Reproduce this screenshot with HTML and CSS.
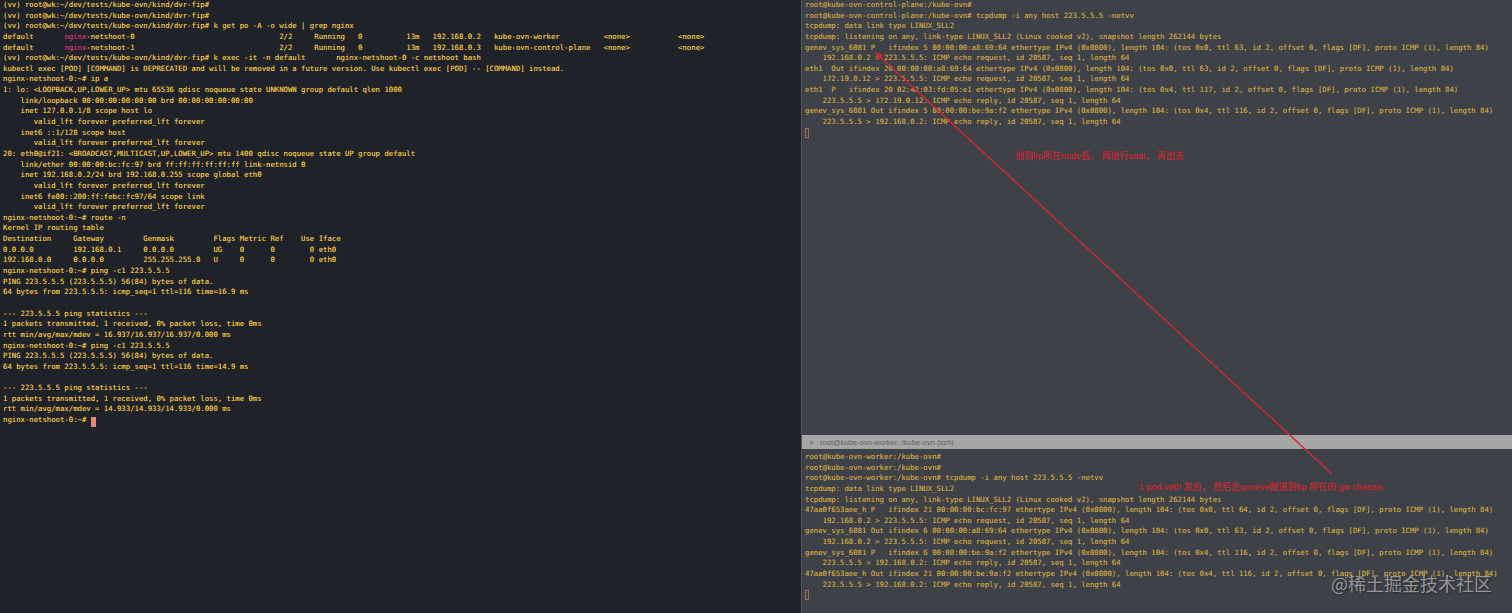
FILE: index.html
```html
<!DOCTYPE html>
<html lang="zh">
<head>
<meta charset="utf-8">
<title>kube-ovn tcpdump</title>
<link rel="stylesheet" href="styles.css">
</head>
<body>
<main class="desktop">
<section class="pane-left">
<pre class="term term-dark">(vv) root@wk:~/dev/tests/kube-ovn/kind/dvr-fip#
(vv) root@wk:~/dev/tests/kube-ovn/kind/dvr-fip#
(vv) root@wk:~/dev/tests/kube-ovn/kind/dvr-fip# k get po -A -o wide | grep nginx
default       <span class="match">nginx</span>-netshoot-0                                 2/2     Running   0          13m   192.168.0.2   kube-ovn-worker          &lt;none&gt;           &lt;none&gt;
default       <span class="match">nginx</span>-netshoot-1                                 2/2     Running   0          13m   192.168.0.3   kube-ovn-control-plane   &lt;none&gt;           &lt;none&gt;
(vv) root@wk:~/dev/tests/kube-ovn/kind/dvr-fip# k exec -it -n default       nginx-netshoot-0 -c netshoot bash
kubectl exec [POD] [COMMAND] is DEPRECATED and will be removed in a future version. Use kubectl exec [POD] -- [COMMAND] instead.
nginx-netshoot-0:~# ip a
1: lo: &lt;LOOPBACK,UP,LOWER_UP&gt; mtu 65536 qdisc noqueue state UNKNOWN group default qlen 1000
    link/loopback 00:00:00:00:00:00 brd 00:00:00:00:00:00
    inet 127.0.0.1/8 scope host lo
       valid_lft forever preferred_lft forever
    inet6 ::1/128 scope host
       valid_lft forever preferred_lft forever
20: eth0@if21: &lt;BROADCAST,MULTICAST,UP,LOWER_UP&gt; mtu 1400 qdisc noqueue state UP group default
    link/ether 00:00:00:bc:fc:97 brd ff:ff:ff:ff:ff:ff link-netnsid 0
    inet 192.168.0.2/24 brd 192.168.0.255 scope global eth0
       valid_lft forever preferred_lft forever
    inet6 fe80::200:ff:febc:fc97/64 scope link
       valid_lft forever preferred_lft forever
nginx-netshoot-0:~# route -n
Kernel IP routing table
Destination     Gateway         Genmask         Flags Metric Ref    Use Iface
0.0.0.0         192.168.0.1     0.0.0.0         UG    0      0        0 eth0
192.168.0.0     0.0.0.0         255.255.255.0   U     0      0        0 eth0
nginx-netshoot-0:~# ping -c1 223.5.5.5
PING 223.5.5.5 (223.5.5.5) 56(84) bytes of data.
64 bytes from 223.5.5.5: icmp_seq=1 ttl=116 time=16.9 ms

--- 223.5.5.5 ping statistics ---
1 packets transmitted, 1 received, 0% packet loss, time 0ms
rtt min/avg/max/mdev = 16.937/16.937/16.937/0.000 ms
nginx-netshoot-0:~# ping -c1 223.5.5.5
PING 223.5.5.5 (223.5.5.5) 56(84) bytes of data.
64 bytes from 223.5.5.5: icmp_seq=1 ttl=116 time=14.9 ms

--- 223.5.5.5 ping statistics ---
1 packets transmitted, 1 received, 0% packet loss, time 0ms
rtt min/avg/max/mdev = 14.933/14.933/14.933/0.000 ms
nginx-netshoot-0:~# <span class="cursor-solid"> </span></pre>
</section>
<section class="pane-right">
<pre class="term term-gray term-top">root@kube-ovn-control-plane:/kube-ovn#
root@kube-ovn-control-plane:/kube-ovn# tcpdump -i any host 223.5.5.5 -netvv
tcpdump: data link type LINUX_SLL2
tcpdump: listening on any, link-type LINUX_SLL2 (Linux cooked v2), snapshot length 262144 bytes
genev_sys_6081 P   ifindex 5 00:00:00:a8:69:64 ethertype IPv4 (0x0800), length 104: (tos 0x0, ttl 63, id 2, offset 0, flags [DF], proto ICMP (1), length 84)
    192.168.0.2 &gt; 223.5.5.5: ICMP echo request, id 20587, seq 1, length 64
eth1  Out ifindex 20 00:00:00:a8:69:64 ethertype IPv4 (0x0800), length 104: (tos 0x0, ttl 63, id 2, offset 0, flags [DF], proto ICMP (1), length 84)
    172.19.0.12 &gt; 223.5.5.5: ICMP echo request, id 20587, seq 1, length 64
eth1  P   ifindex 20 02:42:03:fd:05:e1 ethertype IPv4 (0x0800), length 104: (tos 0x4, ttl 117, id 2, offset 0, flags [DF], proto ICMP (1), length 84)
    223.5.5.5 &gt; 172.19.0.12: ICMP echo reply, id 20587, seq 1, length 64
genev_sys_6081 Out ifindex 5 00:00:00:be:9a:f2 ethertype IPv4 (0x0800), length 104: (tos 0x4, ttl 116, id 2, offset 0, flags [DF], proto ICMP (1), length 84)
    223.5.5.5 &gt; 192.168.0.2: ICMP echo reply, id 20587, seq 1, length 64
<span class="cursor-hollow"> </span></pre>
<header class="tab-bar"><span class="tab-close">✕</span><span class="tab-title">root@kube-ovn-worker: /kube-ovn (ssh)</span></header>
<pre class="term term-gray term-bottom">root@kube-ovn-worker:/kube-ovn#
root@kube-ovn-worker:/kube-ovn#
root@kube-ovn-worker:/kube-ovn# tcpdump -i any host 223.5.5.5 -netvv
tcpdump: data link type LINUX_SLL2
tcpdump: listening on any, link-type LINUX_SLL2 (Linux cooked v2), snapshot length 262144 bytes
47aa0f653aee_h P   ifindex 21 00:00:00:bc:fc:97 ethertype IPv4 (0x0800), length 104: (tos 0x0, ttl 64, id 2, offset 0, flags [DF], proto ICMP (1), length 84)
    192.168.0.2 &gt; 223.5.5.5: ICMP echo request, id 20587, seq 1, length 64
genev_sys_6081 Out ifindex 6 00:00:00:a8:69:64 ethertype IPv4 (0x0800), length 104: (tos 0x0, ttl 63, id 2, offset 0, flags [DF], proto ICMP (1), length 84)
    192.168.0.2 &gt; 223.5.5.5: ICMP echo request, id 20587, seq 1, length 64
genev_sys_6081 P   ifindex 6 00:00:00:be:9a:f2 ethertype IPv4 (0x0800), length 104: (tos 0x4, ttl 116, id 2, offset 0, flags [DF], proto ICMP (1), length 84)
    223.5.5.5 &gt; 192.168.0.2: ICMP echo reply, id 20587, seq 1, length 64
47aa0f653aee_h Out ifindex 21 00:00:00:be:9a:f2 ethertype IPv4 (0x0800), length 104: (tos 0x4, ttl 116, id 2, offset 0, flags [DF], proto ICMP (1), length 84)
    223.5.5.5 &gt; 192.168.0.2: ICMP echo reply, id 20587, seq 1, length 64
<span class="cursor-hollow"> </span></pre>
</section>
<svg class="arrow" width="1512" height="613" viewBox="0 0 1512 613" aria-hidden="true">
<line x1="1332" y1="474" x2="879" y2="56" stroke="#cf2a2e" stroke-width="1.4"/>
<polygon points="875,52 883,55 878,60" fill="#cf2a2e"/>
</svg>
<p class="note note-top">创到lrp所在node后， 再进行snat， 再出去</p>
<p class="note note-bottom">1 pod veth 发包， 然后走geneve隧道到lrp 所在的 gw chassis</p>
<p class="watermark">@稀土掘金技术社区</p>
</main>
</body>
</html>
```
FILE: styles.css
```css
* { box-sizing: border-box; }
html, body { margin: 0; padding: 0; }
body { width: 1512px; height: 613px; overflow: hidden; background: #1f2229; }
.desktop {
  position: relative;
  display: grid;
  grid-template-columns: 801px 711px;
  width: 1512px;
  height: 613px;
  overflow: hidden;
}
.pane-left { background: #1f2229; overflow: hidden; }
.pane-right {
  display: flex;
  flex-direction: column;
  background: #3f4148;
  border-left: 1px solid #55575c;
  overflow: hidden;
}
.term {
  margin: 0;
  font-family: "DejaVu Sans Mono", "Liberation Mono", monospace;
  font-size: 7.295px;
  line-height: 10.64px;
  white-space: pre;
  text-rendering: geometricPrecision;
}
.term-dark { padding: 0 0 0 3px; color: #f0c440; text-shadow: 0 0 0.6px rgba(240, 196, 64, 0.7); }
.term-gray { padding: 0 0 0 3px; color: #cfa842; text-shadow: 0 0 0.6px rgba(207, 168, 66, 0.6); }
.term-top { height: 435px; }
.term-bottom { flex: 1; padding-top: 3px; }
.match { color: #d6317c; text-shadow: 0 0 0.6px rgba(214, 49, 124, 0.7); }
.cursor-solid { display: inline-block; width: 5px; height: 10px; vertical-align: -2px; background: #e8897a; }
.cursor-hollow { display: inline-block; width: 4px; height: 10px; vertical-align: -1px; border: 1px solid #a8665c; }
.tab-bar {
  display: flex;
  align-items: center;
  gap: 6px;
  height: 14px;
  padding-left: 7px;
  background: #a6a6a6;
  font-family: "Liberation Sans", sans-serif;
  font-size: 7.6px;
  color: #626262;
}
.tab-close { font-size: 6px; }
.arrow { position: absolute; left: 0; top: 0; pointer-events: none; }
.note {
  position: absolute;
  margin: 0;
  font-family: "Liberation Sans", "Noto Sans CJK SC", sans-serif;
  font-size: 9px;
  line-height: 12px;
  color: #c42a30;
  text-shadow: 0 0 0.6px rgba(196, 42, 48, 0.8);
  white-space: nowrap;
}
.note-top { left: 1015px; top: 150px; }
.note-bottom { left: 1139px; top: 481px; }
.watermark {
  position: absolute;
  left: 1331px;
  top: 571px;
  margin: 0;
  font-family: "Noto Sans CJK SC", "Liberation Sans", sans-serif;
  font-size: 18px;
  line-height: 24px;
  color: rgba(215, 215, 215, 0.62);
  text-shadow: 1px 1px 2px rgba(0, 0, 0, 0.45);
  white-space: nowrap;
}
```
